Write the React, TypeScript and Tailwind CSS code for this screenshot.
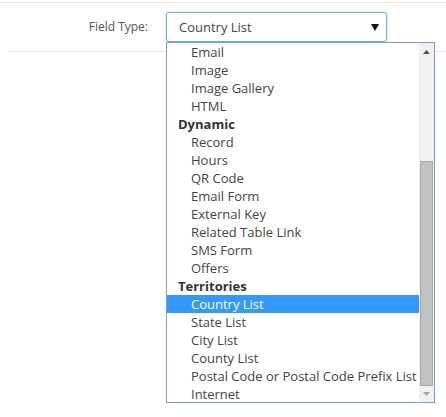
import React from "react";

type Row = { label: string; group?: boolean; selected?: boolean };

const rows: Row[] = [
  { label: "Email" },
  { label: "Image" },
  { label: "Image Gallery" },
  { label: "HTML" },
  { label: "Dynamic", group: true },
  { label: "Record" },
  { label: "Hours" },
  { label: "QR Code" },
  { label: "Email Form" },
  { label: "External Key" },
  { label: "Related Table Link" },
  { label: "SMS Form" },
  { label: "Offers" },
  { label: "Territories", group: true },
  { label: "Country List", selected: true },
  { label: "State List" },
  { label: "City List" },
  { label: "County List" },
  { label: "Postal Code or Postal Code Prefix List" },
  { label: "Internet" },
];

export default function App() {
  return (
    <div
      className="relative w-[446px] h-[417px] bg-white overflow-hidden text-[13px] text-[#555]"
      style={{ fontFamily: '"Open Sans", "Noto Sans", sans-serif' }}
    >
      <div className="pt-[2px]">
        <div className="h-px bg-[#e8e8e8]" />
        <div className="mt-[9px] flex items-center h-[30px]">
          <div className="w-[148px] text-right text-[12px] leading-[18px] text-[#555]">Field Type:</div>
          <div className="ml-[18px] w-[221px] h-[30px] border border-[#66afe9] rounded-[3px] shadow-[0_0_3px_rgba(102,175,233,0.5)] flex items-center pl-[12px] pr-[7px]">
            <span className="flex-1 leading-[18px] text-[#444]">Country List</span>
            <svg width="8" height="7" viewBox="0 0 8 7" className="mt-[1px]">
              <polygon points="0,0 8,0 4,7" fill="#111" />
            </svg>
          </div>
        </div>
        <div className="mt-[9px] ml-[7px] h-px bg-[#e8e8e8]" />
      </div>

      <div className="absolute left-[166px] top-[42px] w-[269px] h-[361px] border border-[#7f9db9] bg-white flex">
        <div className="flex-1 flex flex-col">
          {rows.map((r) => (
            <div
              key={r.label}
              className={
                r.group
                  ? "h-[18px] leading-[18px] pl-[11px] font-bold text-[#333] whitespace-nowrap"
                  : r.selected
                  ? "h-[18px] leading-[18px] pl-[24px] bg-[#3399ff] text-white whitespace-nowrap"
                  : "h-[18px] leading-[18px] pl-[24px] text-[#444] whitespace-nowrap"
              }
            >
              {r.label}
            </div>
          ))}
        </div>
        <div className="w-[15px] bg-[#f0f0f0] flex flex-col items-center">
          <div className="h-[17px] w-full flex items-center justify-center">
            <svg width="7" height="4" viewBox="0 0 7 4">
              <polygon points="3.5,0 7,4 0,4" fill="#505050" />
            </svg>
          </div>
          <div className="mt-[101px] w-[13px] h-[225px] bg-[#c1c1c1] border border-[#a8a8a8]" />
          <div className="flex-1 w-full flex items-center justify-center">
            <svg width="7" height="4" viewBox="0 0 7 4">
              <polygon points="0,0 7,0 3.5,4" fill="#a3a3a3" />
            </svg>
          </div>
        </div>
      </div>
    </div>
  );
}
